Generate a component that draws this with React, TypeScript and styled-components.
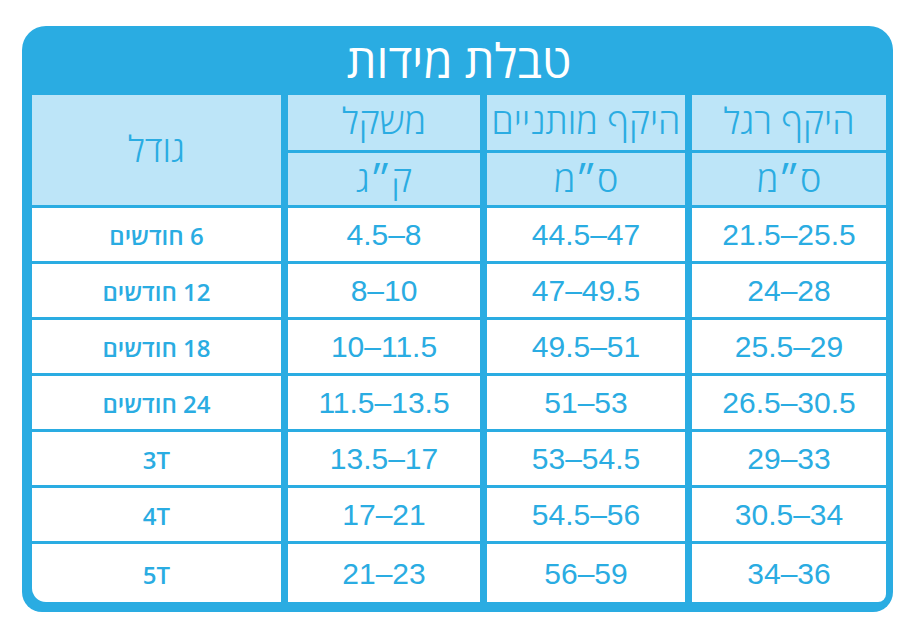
import React from 'react';
import styled, { createGlobalStyle } from 'styled-components';

const Global = createGlobalStyle`
  html, body {
    margin: 0;
    padding: 0;
    background: #ffffff;
  }
  body {
    font-family: 'Open Sans', 'Liberation Sans', 'DejaVu Sans', sans-serif;
  }
`;

const BLUE = '#2aace2';

const Page = styled.div`
  width: 917px;
  height: 621px;
  padding: 26px 24px 9px 22px;
  box-sizing: border-box;
`;

const Frame = styled.div`
  width: 871px;
  height: 586px;
  background: ${BLUE};
  border-radius: 24px 24px 20px 20px;
  padding: 0 7px 10px 10px;
  box-sizing: border-box;
  display: flex;
  flex-direction: column;
`;

const Title = styled.h1`
  margin: 0;
  height: 69px;
  display: flex;
  align-items: center;
  justify-content: center;
  direction: rtl;
  color: #ffffff;
  font-size: 47px;
  font-weight: 500;
  padding-bottom: 2px;
  box-sizing: border-box;
`;

const Grid = styled.div`
  flex: 1;
  direction: rtl;
  display: grid;
  grid-template-columns: 194px 198px 192px 1fr;
  grid-template-rows: 55px 52px repeat(6, 53px) 1fr;
  column-gap: 7px;
  row-gap: 3px;
  background: ${BLUE};
  border-radius: 0 0 8px 14px;
  overflow: hidden;
`;

const Cell = styled.div<{ head?: boolean; tall?: boolean }>`
  display: flex;
  align-items: center;
  justify-content: center;
  background: ${(p) => (p.head ? '#bde5f8' : '#ffffff')};
  color: ${BLUE};
  grid-row: ${(p) => (p.tall ? 'span 2' : 'auto')};
  white-space: nowrap;
`;

const HeadText = styled.span`
  font-size: 36px;
  font-weight: 300;
  padding-bottom: 4px;
`;

const UnitText = styled.span`
  font-size: 36px;
  font-weight: 300;
  padding-bottom: 2px;
`;

const Value = styled.span`
  font-family: 'Liberation Sans', 'DejaVu Sans', sans-serif;
  font-size: 30px;
  font-weight: 400;
  direction: ltr;
  padding-top: 1px;
`;

const SizeLabel = styled.span`
  font-size: 24px;
  font-weight: 600;
  padding-top: 2px;
`;

const rows = [
  { leg: '21.5–25.5', waist: '44.5–47', weight: '4.5–8', size: '6 חודשים' },
  { leg: '24–28', waist: '47–49.5', weight: '8–10', size: '12 חודשים' },
  { leg: '25.5–29', waist: '49.5–51', weight: '10–11.5', size: '18 חודשים' },
  { leg: '26.5–30.5', waist: '51–53', weight: '11.5–13.5', size: '24 חודשים' },
  { leg: '29–33', waist: '53–54.5', weight: '13.5–17', size: '3T' },
  { leg: '30.5–34', waist: '54.5–56', weight: '17–21', size: '4T' },
  { leg: '34–36', waist: '56–59', weight: '21–23', size: '5T' },
];

export default function App() {
  return (
    <>
      <Global />
      <Page>
        <Frame>
          <Title>טבלת מידות</Title>
          <Grid>
            <Cell head>
              <HeadText>היקף רגל</HeadText>
            </Cell>
            <Cell head>
              <HeadText>היקף מותניים</HeadText>
            </Cell>
            <Cell head>
              <HeadText>משקל</HeadText>
            </Cell>
            <Cell head tall>
              <HeadText>גודל</HeadText>
            </Cell>
            <Cell head>
              <UnitText>ס״מ</UnitText>
            </Cell>
            <Cell head>
              <UnitText>ס״מ</UnitText>
            </Cell>
            <Cell head>
              <UnitText>ק״ג</UnitText>
            </Cell>
            {rows.map((r) => (
              <React.Fragment key={r.size}>
                <Cell>
                  <Value>{r.leg}</Value>
                </Cell>
                <Cell>
                  <Value>{r.waist}</Value>
                </Cell>
                <Cell>
                  <Value>{r.weight}</Value>
                </Cell>
                <Cell>
                  <SizeLabel>{r.size}</SizeLabel>
                </Cell>
              </React.Fragment>
            ))}
          </Grid>
        </Frame>
      </Page>
    </>
  );
}
